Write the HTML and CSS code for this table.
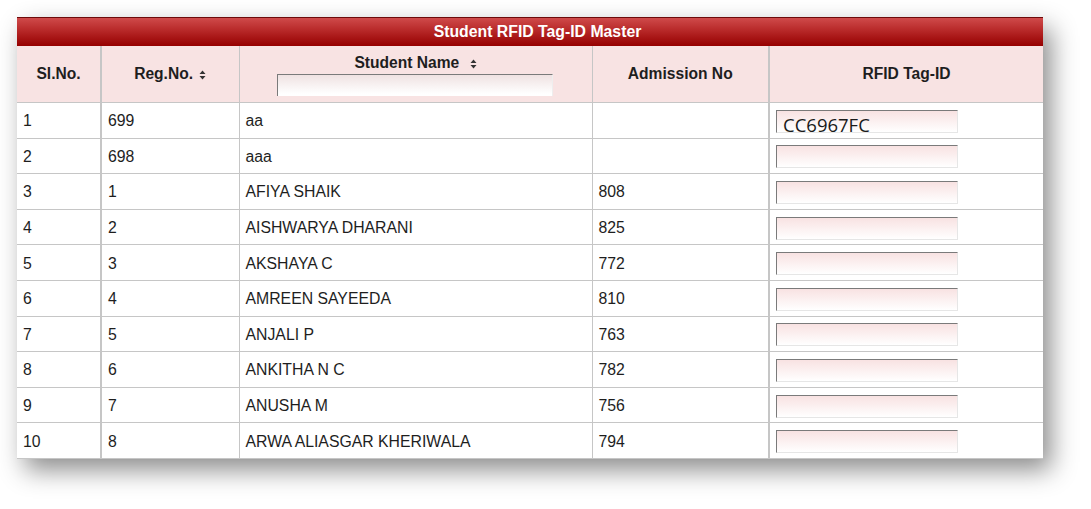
FILE: index.html
```html
<!DOCTYPE html>
<html>
<head>
<meta charset="utf-8">
<link rel="stylesheet" href="styles.css">
</head>
<body>
<div class="panel">
  <div class="title">Student RFID Tag-ID Master</div>
  <table class="grid">
    <colgroup>
      <col class="c1"><col class="c2"><col class="c3"><col class="c4"><col class="c5">
    </colgroup>
    <thead>
      <tr>
        <th class="b2">Sl.No.</th>
        <th>Reg.No. <svg class="sort" viewBox="0 0 7 10" width="7" height="10"><path d="M0.5 4 L3.5 0.5 L6.5 4 Z M0.5 6 L3.5 9.5 L6.5 6 Z" fill="#333"/></svg></th>
        <th class="name-h"><div class="name-label">Student Name <svg class="sort wide" viewBox="0 0 7 10" width="7" height="10"><path d="M0.5 4 L3.5 0.5 L6.5 4 Z M0.5 6 L3.5 9.5 L6.5 6 Z" fill="#333"/></svg></div><input class="filter" type="text"></th>
        <th class="b2">Admission No</th>
        <th>RFID Tag-ID</th>
      </tr>
    </thead>
    <tbody>
      <tr><td class="b2">1</td><td>699</td><td>aa</td><td class="b2"></td><td><input class="tag" type="text" value="CC6967FC"></td></tr>
      <tr><td class="b2">2</td><td>698</td><td>aaa</td><td class="b2"></td><td><input class="tag" type="text"></td></tr>
      <tr><td class="b2">3</td><td>1</td><td>AFIYA SHAIK</td><td class="b2">808</td><td><input class="tag" type="text"></td></tr>
      <tr><td class="b2">4</td><td>2</td><td>AISHWARYA DHARANI</td><td class="b2">825</td><td><input class="tag" type="text"></td></tr>
      <tr><td class="b2">5</td><td>3</td><td>AKSHAYA C</td><td class="b2">772</td><td><input class="tag" type="text"></td></tr>
      <tr><td class="b2">6</td><td>4</td><td>AMREEN SAYEEDA</td><td class="b2">810</td><td><input class="tag" type="text"></td></tr>
      <tr><td class="b2">7</td><td>5</td><td>ANJALI P</td><td class="b2">763</td><td><input class="tag" type="text"></td></tr>
      <tr><td class="b2">8</td><td>6</td><td>ANKITHA N C</td><td class="b2">782</td><td><input class="tag" type="text"></td></tr>
      <tr><td class="b2">9</td><td>7</td><td>ANUSHA M</td><td class="b2">756</td><td><input class="tag" type="text"></td></tr>
      <tr><td class="b2">10</td><td>8</td><td>ARWA ALIASGAR KHERIWALA</td><td class="b2">794</td><td><input class="tag" type="text"></td></tr>
    </tbody>
  </table>
</div>
</body>
</html>
```

FILE: styles.css
```css
html, body {
  margin: 0;
  padding: 0;
  background: #ffffff;
}
body {
  min-height: 509px;
  box-sizing: border-box;
  padding: 17px 0 50px 17px;
  font-family: "Liberation Sans", Arial, sans-serif;
  color: #1e1e1e;
}
.panel {
  width: 1026px;
  background: #fff;
  box-shadow: 8px 11px 24px rgba(0, 0, 0, 0.45);
}
.title {
  height: 28px;
  border-top: 1px solid #6e0a0a;
  background: linear-gradient(to bottom, #cf4a4a 0%, #b72828 45%, #960000 100%);
  color: #ffffff;
  font-weight: bold;
  font-size: 15.8px;
  line-height: 27px;
  text-align: center;
  padding-left: 15px;
}
.grid {
  width: 1026px;
  border-collapse: collapse;
  table-layout: fixed;
  font-size: 15.8px;
}
.c1 { width: 84px; }
.c2 { width: 138px; }
.c3 { width: 353px; }
.c4 { width: 177px; }
.c5 { width: 274px; }
.grid th {
  height: 56px;
  background: #f8e3e3;
  font-weight: bold;
  font-size: 15.6px;
  color: #1e1e1e;
  text-align: center;
  vertical-align: middle;
  padding: 0;
  border-left: 1px solid #c6c6c6;
  border-bottom: 1px solid #c6c6c6;
}
.grid td {
  height: 32.6px;
  padding: 2px 0 0 6px;
  border-left: 1px solid #c6c6c6;
  border-bottom: 1px solid #c6c6c6;
  vertical-align: middle;
}
.grid tr > :first-child { border-left: none; }
.grid .b2 { border-right: 2px solid #c6c6c6; }
.name-h { padding-top: 2px; }
.name-label {
  line-height: 20px;
}
.sort {
  display: inline-block;
  margin-left: 2px;
  vertical-align: -1px;
}
.sort.wide { margin-left: 6px; }
input {
  box-sizing: border-box;
  border-style: solid;
  border-width: 1px 0 0 1px;
  border-color: #7a7a7a #e8e8e8 #e8e8e8 #7a7a7a;
  outline: none;
  margin: 0;
}
.filter {
  display: block;
  width: 276px;
  height: 22px;
  margin: 1px 0 0 37px;
  background: linear-gradient(to bottom, #efe2e2 0%, #ffffff 90%);
  border-right: 1px solid #eeeeee;
}
.tag {
  display: block;
  width: 182px;
  height: 23px;
  border-right: 1px solid #e6e6e6;
  border-bottom: 1px solid #e6e6e6;
  background: linear-gradient(to bottom, #f8e2e2 0%, #ffffff 100%);
  font-family: "Open Sans", "DejaVu Sans", sans-serif;
  font-size: 18.5px;
  color: #1a1a1a;
  padding: 7px 0 0 6px;
  line-height: 22px;
  overflow: hidden;
}
```
